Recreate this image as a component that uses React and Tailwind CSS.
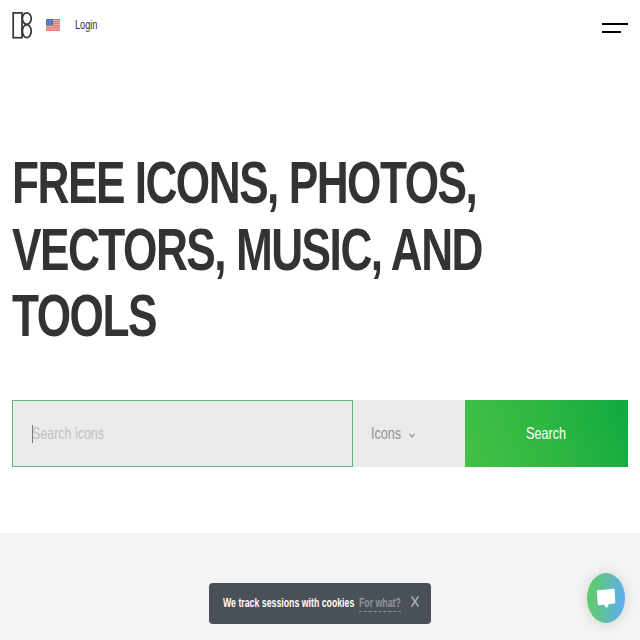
const FONT = "font-['Liberation_Sans',Arial,sans-serif]";

function Narrow({ className = "", scale = "scale-x-[0.765]", children }) {
  return (
    <span className={`block origin-left whitespace-nowrap ${scale} ${className}`}>
      {children}
    </span>
  );
}

function Logo() {
  return (
    <svg width="20" height="27" viewBox="0 0 20 27" fill="none" stroke="#333" strokeWidth="1.7">
      <rect x="1.2" y="0.9" width="8.8" height="24.8" />
      <ellipse cx="14.8" cy="6.6" rx="4.4" ry="5.7" />
      <ellipse cx="14.8" cy="19.2" rx="4.4" ry="6.5" />
    </svg>
  );
}

function Flag() {
  return (
    <svg width="14" height="12" viewBox="0 0 14 12">
      <rect width="14" height="12" fill="#f3cfcf" />
      {[0, 2.1, 4.2, 6.3, 8.4, 10.6].map((y) => (
        <rect key={y} y={y} width="14" height="1.2" fill="#e4605f" />
      ))}
      <rect width="7" height="6.3" fill="#5470b5" />
      <path d="M1 1.5h5M1 3.2h5M1 4.9h5" stroke="#93a5d3" strokeWidth="0.7" strokeDasharray="0.8 0.8" />
    </svg>
  );
}

const HEADLINE = ["FREE ICONS, PHOTOS,", "VECTORS, MUSIC, AND", "TOOLS"];

export default function App() {
  return (
    <div className={`relative flex h-[640px] w-[640px] flex-col overflow-hidden bg-white text-[#333] ${FONT}`}>
      <header className="flex h-[50px] shrink-0 items-center pl-3 pr-3">
        <Logo />
        <div className="ml-[14px]">
          <Flag />
        </div>
        <a className="ml-[15.4px] w-[22px] text-[12px] leading-4">
          <Narrow>Login</Narrow>
        </a>
        <div className="ml-auto mt-[5px] flex w-[26px] flex-col gap-[6px]">
          <span className="h-[2px] w-[26px] bg-black" />
          <span className="h-[2px] w-[19px] bg-black" />
        </div>
      </header>

      <h1 className="mt-[100px] h-[200px] w-[620px] shrink-0 pl-[12.4px] text-[59px] font-bold leading-[66.7px] tracking-[-2px]">
        {HEADLINE.map((line) => (
          <Narrow key={line} scale="scale-x-[0.749]">{line}</Narrow>
        ))}
      </h1>

      <div className="mx-3 mt-[50px] flex h-[67px] shrink-0 text-[16.5px] leading-5">
        <div className="flex w-[341px] items-center border border-[#5fb583] bg-[#ebebeb] pl-[19px]">
          <span className="h-[18px] w-px bg-[#777]" />
          <Narrow className="-ml-px mb-px text-[#c0c0c0]" scale="scale-x-[0.755]">Search icons</Narrow>
        </div>
        <div className="flex w-[112px] items-center bg-[#ebebeb] pl-[18px] text-[#929292]">
          <span className="mb-px w-[38px]">
            <Narrow>Icons</Narrow>
          </span>
          <svg className="mt-1" width="6" height="5" viewBox="0 0 6 5" fill="none" stroke="#929292" strokeWidth="1.2">
            <path d="M0.4 0.8 3 4 5.6 0.8" />
          </svg>
        </div>
        <button className="flex flex-1 items-center bg-[linear-gradient(68deg,#45c045_0%,#2fb742_50%,#0fa93f_100%)] pl-[61px] text-white">
          <Narrow className="mb-px">Search</Narrow>
        </button>
      </div>

      <section className="mt-[66px] flex flex-1 justify-center bg-[#f4f4f4] pt-[49.5px]">
        <div className="flex h-[41px] w-[222px] items-center rounded-[4px] bg-[#4a5058] pl-[14px] text-[12px] font-bold leading-4">
          <span className="w-[136px] text-white">
            <Narrow scale="scale-x-[0.73]">We track sessions with cookies</Narrow>
          </span>
          <span className="w-[42px] border-b border-dashed border-[#8b9097] text-[#92979d]">
            <Narrow scale="scale-x-[0.73]">For what?</Narrow>
          </span>
          <svg className="mb-[4px] ml-[10px]" width="8" height="11" viewBox="0 0 8 11" stroke="#a9adb2" strokeWidth="1.6">
            <path d="M0.5 0.5l7 10M7.5 0.5l-7 10" />
          </svg>
        </div>
      </section>

      <button className="absolute left-[587px] top-[573px] flex h-[50px] w-[38px] items-center justify-center rounded-[50%] bg-[linear-gradient(95deg,#62cd66_5%,#5dbfa5_50%,#60acf5_95%)] shadow-[0_1px_14px_rgba(0,0,0,0.14)]">
        <svg width="20" height="22" viewBox="0 0 20 22" fill="#fff">
          <path d="M.8 4.4 Q.8 3.4 1.7 3.3 L17.6 1.8 Q18.5 1.7 18.6 2.6 L19.3 15.4 Q19.3 16.3 18.4 16.4 L13 17 10.8 21.2 8 17.7 3 18.2 Q2 18.3 1.8 17.3Z" />
        </svg>
      </button>
    </div>
  );
}
